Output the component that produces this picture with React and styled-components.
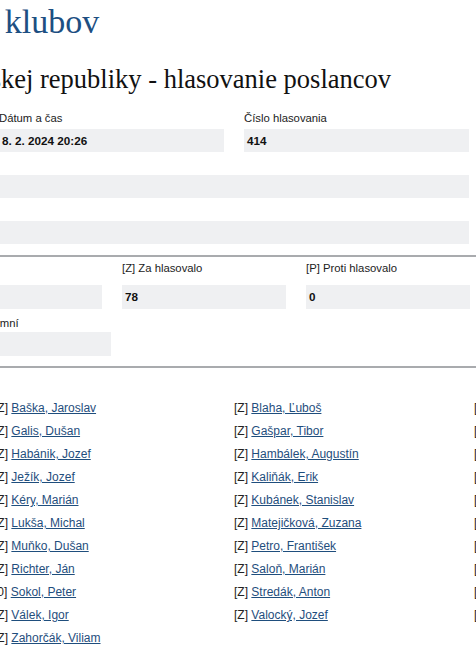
import React from 'react';
import styled, { createGlobalStyle } from 'styled-components';

const GlobalStyle = createGlobalStyle`
  html, body {
    margin: 0;
    padding: 0;
    background: #ffffff;
    overflow: hidden;
  }
  body {
    font-family: "Liberation Sans", Arial, sans-serif;
    color: #222222;
  }
`;

// the screenshot is scrolled sideways, so the page starts left of the window
const Page = styled.div`
  margin-left: -246px;
  width: 1100px;
`;

const Title = styled.h1`
  margin: 2px 0 0;
  padding-left: 1px;
  font-family: "Liberation Serif", "Times New Roman", serif;
  font-weight: normal;
  font-size: 34px;
  line-height: 39px;
  color: #1d4f82;
`;

const SubTitle = styled.h2`
  margin: 23px 0 0;
  padding-left: 13px;
  font-family: "Liberation Serif", "Times New Roman", serif;
  font-weight: normal;
  font-size: 26.5px;
  line-height: 30px;
  color: #111111;
`;

const InfoGrid = styled.div`
  display: grid;
  grid-template-columns: repeat(3, 225px);
  column-gap: 20px;
  row-gap: 5px;
  margin-top: 17px;
  width: 715px;
`;

const Field = styled.div`
  display: flex;
  flex-direction: column;
  grid-column: ${p => (p.$wide ? '1 / -1' : 'auto')};
`;

const Label = styled.div`
  height: ${p => p.$h || 14}px;
  margin-bottom: ${p => p.$gap ?? 4}px;
  font-size: 11.3px;
  line-height: 14px;
  color: #222222;
  white-space: nowrap;
`;

const Value = styled.div`
  height: ${p => p.$h || 23}px;
  line-height: ${p => p.$h || 23}px;
  padding-left: 3px;
  background: #eff0f2;
  font-size: 11.7px;
  font-weight: bold;
  color: #111111;
  white-space: nowrap;
`;

const Rule = styled.hr`
  margin: ${p => p.$top}px 0 0;
  border: 0;
  border-top: 2px solid #a9abae;
  width: 1100px;
`;

const StatsRow = styled.div`
  display: grid;
  grid-template-columns: repeat(${p => p.$cols}, 164px);
  column-gap: 20px;
  margin-top: ${p => p.$top}px;
  padding-left: ${p => p.$indent || 0}px;
`;

const MemberGrid = styled.div`
  display: grid;
  grid-template-columns: repeat(4, 240px);
  grid-auto-rows: 23px;
  margin-top: 29px;
`;

const Member = styled.div`
  font-size: 12px;
  line-height: 23px;
  white-space: nowrap;
  color: #222222;
`;

const MemberLink = styled.a`
  color: #1f4e7d;
  text-decoration: underline;
  text-underline-offset: 1px;
  cursor: pointer;
`;

const members = [
  ['Z', 'Ballek, Tibor'], ['Z', 'Baška, Jaroslav'], ['Z', 'Blaha, Ľuboš'], ['Z', 'Číž, Miroslav'],
  ['Z', 'Fico, Robert'], ['Z', 'Galis, Dušan'], ['Z', 'Gašpar, Tibor'], ['Z', 'Glück, Richard'],
  ['Z', 'Glváč, Martin'], ['Z', 'Habánik, Jozef'], ['Z', 'Hambálek, Augustín'], ['Z', 'Huliak, Rudolf'],
  ['Z', 'Jasaň, Radovan'], ['Z', 'Ježík, Jozef'], ['Z', 'Kaliňák, Erik'], ['Z', 'Kamenický, Ladislav'],
  ['Z', 'Kazda, Ján'], ['Z', 'Kéry, Marián'], ['Z', 'Kubánek, Stanislav'], ['Z', 'Laššáková, Ľubica'],
  ['Z', 'Lazar, Michal'], ['Z', 'Lukša, Michal'], ['Z', 'Matejičková, Zuzana'], ['Z', 'Migaľ, Samuel'],
  ['Z', 'Mizík, Stanislav'], ['Z', 'Muňko, Dušan'], ['Z', 'Petro, František'], ['Z', 'Podmanický, Richard'],
  ['Z', 'Puci, Ján'], ['Z', 'Richter, Ján'], ['Z', 'Saloň, Marián'], ['Z', 'Senko, Peter'],
  ['Z', 'Smatana, Pavol'], ['0', 'Sokol, Peter'], ['Z', 'Stredák, Anton'], ['Z', 'Šutaj Eštok, Matúš'],
  ['Z', 'Takáč, Richard'], ['Z', 'Válek, Igor'], ['Z', 'Valocký, Jozef'], ['Z', 'Vašečka, Richard'],
  ['Z', 'Vážny, Ján'], ['Z', 'Zahorčák, Viliam'],
];

const App = () => {
  return (
    <>
      <GlobalStyle />
      <Page>
        <Title>Hlasovanie podľa klubov</Title>
        <SubTitle>Národná rada Slovenskej republiky - hlasovanie poslancov</SubTitle>

        <InfoGrid>
          <Field>
            <Label>Schôdza č.</Label>
            <Value>9</Value>
          </Field>
          <Field>
            <Label>Dátum a čas</Label>
            <Value>8. 2. 2024 20:26</Value>
          </Field>
          <Field>
            <Label>Číslo hlasovania</Label>
            <Value>414</Value>
          </Field>
          <Field $wide>
            <Label />
            <Value />
          </Field>
          <Field $wide>
            <Label />
            <Value />
          </Field>
        </InfoGrid>

        <Rule $top={11} />

        <StatsRow $cols={4} $top={4}>
          <Field>
            <Label $h={24} $gap={0}>Prítomní</Label>
            <Value $h={24}>78</Value>
          </Field>
          <Field>
            <Label $h={24} $gap={0}>Hlasujúcich</Label>
            <Value $h={24}>78</Value>
          </Field>
          <Field>
            <Label $h={24} $gap={0}>[Z] Za hlasovalo</Label>
            <Value $h={24}>78</Value>
          </Field>
          <Field>
            <Label $h={24} $gap={0}>[P] Proti hlasovalo</Label>
            <Value $h={24}>0</Value>
          </Field>
        </StatsRow>
        <StatsRow $cols={2} $top={7} $indent={9}>
          <Field>
            <Label $gap={2}>[N] Nehlasovalo</Label>
            <Value $h={24}>0</Value>
          </Field>
          <Field>
            <Label $gap={2}>[0] Neprítomní</Label>
            <Value $h={24}></Value>
          </Field>
        </StatsRow>

        <Rule $top={10} />

        <MemberGrid>
          {members.map(([vote, name]) => (
            <Member key={name}>
              [{vote}] <MemberLink>{name}</MemberLink>
            </Member>
          ))}
        </MemberGrid>
      </Page>
    </>
  );
};

export default App;
